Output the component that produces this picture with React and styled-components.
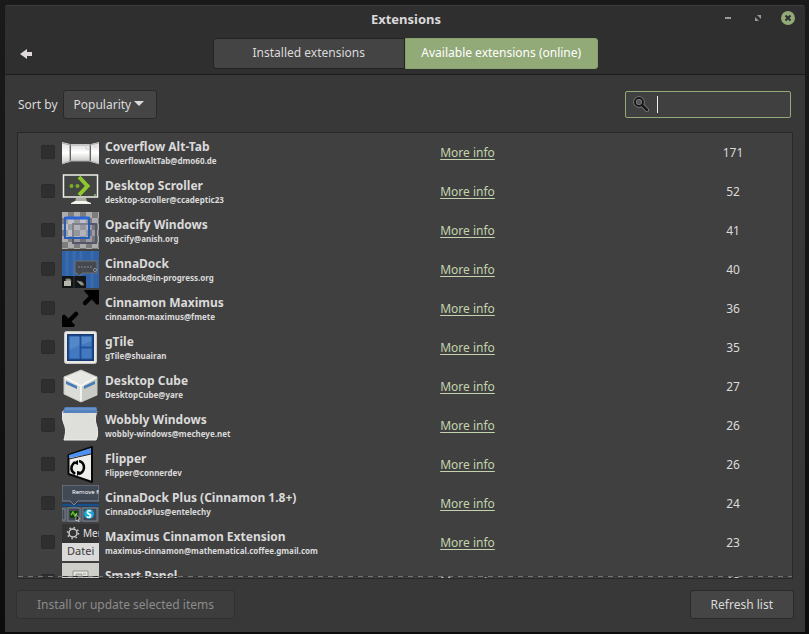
import React from "react";
import styled, { createGlobalStyle } from "styled-components";

const GlobalStyle = createGlobalStyle`
  * { box-sizing: border-box; }
  body {
    margin: 0;
    background: #161616;
    color: #dadada;
    font: 12px/18px "Noto Sans", sans-serif;
  }
  button, input, select { font: inherit; color: inherit; }
`;

const Desktop = styled.div`
  display: flex;
  height: 100vh;
  padding: 5px 4px 2px 5px;
  background: linear-gradient(#1a1a1a, #0c0c0c);
`;

const Window = styled.main`
  display: flex;
  flex: 1;
  flex-direction: column;
  min-width: 0;
  background: #383838;
  border-radius: 3px 3px 0 0;
  overflow: hidden;
`;

const Header = styled.header`
  height: 70px;
  flex: none;
  background: #2f2f2f;
  border-top: 1px solid #3d3d3d;
  border-bottom: 1px solid #1c1c1c;
`;

const TitleBar = styled.div`
  display: grid;
  grid-template-columns: 1fr auto 1fr;
  align-items: center;
  height: 24px;
  padding: 0 10px 0 12px;
`;

const Title = styled.h1`
  grid-column: 2;
  margin: 0;
  padding-top: 2px;
  font-size: 13px;
  line-height: 18px;
  font-weight: 700;
`;

const WindowButtons = styled.div`
  display: flex;
  justify-content: flex-end;
  gap: 16px;
`;

const IconButton = styled.button`
  display: flex;
  padding: 0;
  border: 0;
  background: none;
`;

const NavBar = styled.div`
  display: grid;
  grid-template-columns: 1fr 385px 1fr;
  align-items: center;
  height: 31px;
  margin-top: 8px;
  padding: 0 15px;
`;

const Tabs = styled.div`
  display: grid;
  grid-template-columns: 1fr 1fr;
  height: 31px;
`;

const Tab = styled.button`
  padding: 0 0 2px;
  border: 1px solid ${(p) => (p.$active ? "#8aa06e" : "#222")};
  border-radius: ${(p) => (p.$active ? "0 3px 3px 0" : "3px 0 0 3px")};
  background: ${(p) => (p.$active ? "#92a978" : "#444")};
  color: ${(p) => (p.$active ? "#fff" : "#dadada")};
`;

const Toolbar = styled.div`
  display: flex;
  align-items: center;
  flex: none;
  height: 57px;
  padding: 1px 14px 0 13px;
`;

const SortLabel = styled.label`
  padding-top: 1px;
  margin-right: 5px;
`;

const SelectWrap = styled.span`
  display: grid;
  grid-template-columns: 1fr 22px;
  align-items: center;
  width: 94px;
  height: 29px;
  border: 1px solid #292929;
  border-radius: 3px;
  background: #454545;

  svg { grid-area: 1 / 2; pointer-events: none; }
`;

const Select = styled.select`
  grid-area: 1 / 1 / 2 / 3;
  width: 100%;
  height: 27px;
  padding: 1px 10px 0;
  border: 0;
  background: none;
  appearance: none;
  outline: none;
`;

const SearchBox = styled.label`
  display: flex;
  align-items: center;
  width: 166px;
  height: 27px;
  margin-left: auto;
  padding: 0 8px 0 7px;
  border: 1px solid #92a978;
  border-radius: 2px;
  background: #404040;
`;

const Caret = styled.span`
  width: 1px;
  height: 17px;
  margin-left: 8px;
  background: #f0f0f0;
`;

const SearchInput = styled.input`
  flex: 1;
  min-width: 0;
  padding: 0;
  border: 0;
  background: none;
  outline: none;
`;

const ListFrame = styled.section`
  position: relative;
  flex: 1;
  min-height: 0;
  margin: 0 12px;
  border: 1px solid #282828;
  background: #404040;
  overflow: hidden;
`;

const OverflowHint = styled.div`
  position: absolute;
  right: 0;
  bottom: 1px;
  left: 0;
  height: 1px;
  background: repeating-linear-gradient(90deg, #747474 0 5px, #333 5px 10px);
`;

const List = styled.table`
  width: 100%;
  table-layout: fixed;
  border-collapse: collapse;
`;

const Column = styled.col`
  width: ${(p) => p.$width};
`;

const Row = styled.tr`
  height: 39px;
`;

const Cell = styled.td`
  padding: ${(p) => p.$pad || "0"};
  text-align: ${(p) => p.$align || "left"};
  vertical-align: middle;

  svg { display: block; }
`;

const Check = styled.input`
  display: block;
  appearance: none;
  width: 14px;
  height: 14px;
  margin: 0;
  border: 1px solid #292a32;
  border-radius: 2px;
  background: #2f2f2f;
`;

const Name = styled.label`
  display: block;
  font-weight: 700;
  line-height: 17px;
  white-space: nowrap;
`;

const Uuid = styled.div`
  font-size: 8px;
  font-weight: 700;
  line-height: 12px;
  white-space: nowrap;
`;

const InfoLink = styled.a`
  color: #c2d3ad;
  text-underline-offset: 2px;
`;

const Footer = styled.footer`
  display: flex;
  justify-content: space-between;
  flex: none;
  padding: 11px 11px 13px;
`;

const FooterButton = styled.button`
  height: 29px;
  padding: 0 20px;
  border: 1px solid #2a2a2a;
  border-radius: 3px;
  background: #454545;

  &:disabled {
    border-color: #303030;
    background: #3d3d3d;
    color: #8b8b8b;
  }
`;

const Thumb = ({ children }) => (
  <svg width="37" height="37" viewBox="0 0 37 37" aria-hidden="true">{children}</svg>
);

const Coverflow = () => (
  <Thumb>
    <defs>
      <linearGradient id="cf" x2="0" y2="1"><stop stopColor="#ddd" /><stop offset=".5" stopColor="#fff" /><stop offset="1" stopColor="#c9c9c6" /></linearGradient>
    </defs>
    <path d="M0 8l8 2v18l-8 2z" fill="url(#cf)" />
    <path d="M37 8l-8 2v18l8 2z" fill="url(#cf)" />
    <path d="M9 10h19v17H9z" fill="url(#cf)" />
    <path d="M8 10v18M28 10v18" stroke="#85857f" />
    <path d="M0 9l8 2h20l9-2M0 30l8-3h20l9 3" fill="none" stroke="#aaa" />
    <path d="M24 11v4h3M32 10v3h3" fill="none" stroke="#d0d0cb" />
  </Thumb>
);

const Scroller = () => (
  <Thumb>
    <path d="M14 25h10l1 4H13z" fill="#aaa9a2" />
    <path d="M9 30l4-2h11l5 2v1H9z" fill="#f4f4ee" />
    <rect x="1.5" y="2" width="34" height="22" fill="#424541" stroke="#eeeee9" strokeWidth="1.5" />
    <path d="M17 4l8.5 9-8.5 9" fill="none" stroke="#8dc928" strokeWidth="4" />
    <circle cx="9.5" cy="13" r="2" fill="#7bae27" />
    <circle cx="15.5" cy="13" r="2" fill="#7bae27" />
    <circle cx="33" cy="22" r="1" fill="#94b867" />
  </Thumb>
);

const Opacify = () => (
  <Thumb>
    <defs>
      <pattern id="checks" width="12" height="12" patternUnits="userSpaceOnUse">
        <path fill="#acacac" d="M0 0h12v12H0z" /><path fill="#7c7c7c" d="M0 6h6v6H0zM6 0h6v6H6z" />
      </pattern>
    </defs>
    <path fill="url(#checks)" d="M0 0h37v37H0z" />
    <path d="M11 12h23v19H11z" fill="#55566c33" stroke="#55556c" strokeWidth="2" />
    <path d="M3 6h24v20H3z" fill="#f4f9ff44" stroke="#265dbc" strokeWidth="2" />
    <path d="M3 6h24" stroke="#2a66d8" strokeWidth="3" />
  </Thumb>
);

const CinnaDock = () => (
  <Thumb>
    <path d="M0 0h37v37H0z" fill="#3060a5" />
    <path d="M5 0v26M12 0v26M19 0v26M30 0v37" stroke="#3a6bac" strokeWidth="3" />
    <path d="M13 10h22v12H20l-3 3-2-3h-2z" fill="#45494f" stroke="#6c7074" />
    <path d="M16 16h14" stroke="#85898d" strokeDasharray="2 1" />
    <circle cx="33" cy="19" r="1.5" fill="#333" stroke="#bbb" strokeWidth=".7" />
    <path d="M0 25h24v12H0z" fill="#111517" />
    <path d="M12 25v12" stroke="#343838" />
    <path d="M2 30h7v5H2z" fill="#b8b6ac" />
    <path d="M4 30v-2h4l1 2M15 30l5 1 2 3h-3z" fill="#9b998b" stroke="#77786f" />
  </Thumb>
);

const Arrows = () => (
  <Thumb>
    <path d="M32 4L23 13M5 33l9-9" stroke="#000" strokeWidth="4.5" strokeLinecap="round" />
    <path d="M22 1q0-1 2-1h13v14q-2 2-4-1L24 3zM0 26q2-3 4 0l9 9q0 2-2 2H0z" fill="#000" />
  </Thumb>
);

const Tile = () => (
  <Thumb>
    <rect x="2.5" y="2.5" width="32" height="32" rx="2" fill="#e8e8e5" stroke="#c9c9c5" />
    <rect x="5" y="5" width="27" height="27" fill="#173a72" />
    <path d="M7 7h11v23H7zM19 7h11v11H19zM19 19h11v11H19z" fill="#4379c0" />
    <path d="M7 7h11v9L7 21zM19 7h11v5l-11 4z" fill="#5588c9" />
    <path d="M7 7h11v23H7zM19 7h11v11H19zM19 19h11v11H19z" fill="none" stroke="#2459a0" />
  </Thumb>
);

const Cube = () => (
  <Thumb>
    <path d="M2 9l17-7 16 7v18l-16 7-17-8z" fill="#e7e8e4" />
    <path d="M2 9l17 9v16L2 26z" fill="#dcddd8" />
    <path d="M35 9l-16 9v16l16-8z" fill="#c9cbc5" />
    <path d="M2 9l17 9 16-9M19 18v16" fill="none" stroke="#fafaf7" strokeWidth="1.5" />
    <path d="M4 13l11 5v3L4 16zM33 13l-11 5v3l11-5z" fill="#477bb5" />
    <path d="M2 9l17-7 16 7v18l-16 7-17-8z" fill="none" stroke="#c3c5be" />
  </Thumb>
);

const Wobbly = () => (
  <Thumb>
    <path d="M1 4h34c-3 9-1 12 0 16 1 5 1 9-1 13H2c2-8 2-11 0-16-2-5-2-9-1-13z" fill="#dededb" stroke="#f1f1ef" />
    <path d="M2 2q0-2 2-2h29q2 0 2 2v4H1z" fill="#5582be" />
    <path d="M3 2h31" stroke="#78a2d7" />
  </Thumb>
);

const Flipper = () => (
  <Thumb>
    <path d="M6.5 9L30 1v35L6.5 28z" fill="#eeeeeb" stroke="#080808" strokeWidth="2" strokeLinejoin="round" />
    <path d="M7 9l22-7v6L7 12z" fill="#4e91f4" />
    <path d="M7 13l22-5" stroke="#222" />
    <path d="M13 16q-5 4-3 9l3 3M17 15q5 1 5 7-1 5-5 6" fill="none" stroke="#050505" strokeWidth="2.5" />
    <path d="M11 17l5-3v5zM20 26l-5 4v-5z" fill="#050505" />
  </Thumb>
);

const DockPlus = () => (
  <Thumb>
    <path d="M0 0h37v37H0z" fill="#303a49" />
    <path d="M0 0h37v16H16l-4 4-4-4H0z" fill="#414954" stroke="#7e8794" />
    <text x="10" y="9" fill="#fff" fontFamily="Noto Sans" fontSize="6">Remove fr</text>
    <path d="M0 20h8l4 2 4-2h21" fill="none" stroke="#12518b" strokeWidth="2" />
    <path d="M0 22h37v15H0z" fill="#535b66" />
    <path d="M0 24h3v11H0zM6 23h12v13H6zM21 23h14v13H21z" fill="#404751" stroke="#7c828c" />
    <path d="M8 26h8v7H8z" fill="#123c0b" /><path d="M9 30l2-3 2 4 2-3" fill="none" stroke="#6ab736" strokeWidth="1.5" />
    <circle cx="27" cy="29" r="5" fill="#15a9e5" />
    <text x="24" y="33" fill="#fff" fontFamily="Noto Sans" fontSize="10" fontWeight="700">S</text>
    <path d="M14 29l4 5h-2l1 3-2-2-1 1z" fill="#111" stroke="#eee" strokeWidth=".6" />
  </Thumb>
);

const Maximus = () => (
  <Thumb>
    <path d="M0 0h37v19H0z" fill="#343434" />
    <path d="M0 19h37v18H0z" fill="#dadada" />
    <circle cx="11" cy="9" r="4" fill="none" stroke="#ccc" strokeWidth="1.5" />
    <circle cx="11" cy="9" r="5.5" fill="none" stroke="#ccc" strokeWidth="1.5" strokeDasharray="1.5 2.8" />
    <text x="21" y="13" fill="#e5e5e5" fontFamily="Noto Sans" fontSize="10">Mer</text>
    <text x="5" y="31" fill="#3c3c3c" fontFamily="Noto Sans" fontSize="11">Datei</text>
  </Thumb>
);

const Panel = () => (
  <Thumb>
    <path d="M0 0h37v37H0z" fill="#cfcfca" />
    <path d="M11 8h15v13H11z" fill="#e8e8e3" stroke="#92958c" />
    <path d="M14 11h6v4h-6zM21 11h3M21 14h3" fill="#c9cbc3" stroke="#9b9d96" />
  </Thumb>
);

const extensions = [
  ["Coverflow Alt-Tab", "CoverflowAltTab@dmo60.de", 171, Coverflow],
  ["Desktop Scroller", "desktop-scroller@ccadeptic23", 52, Scroller],
  ["Opacify Windows", "opacify@anish.org", 41, Opacify],
  ["CinnaDock", "cinnadock@in-progress.org", 40, CinnaDock],
  ["Cinnamon Maximus", "cinnamon-maximus@fmete", 36, Arrows],
  ["gTile", "gTile@shuairan", 35, Tile],
  ["Desktop Cube", "DesktopCube@yare", 27, Cube],
  ["Wobbly Windows", "wobbly-windows@mecheye.net", 26, Wobbly],
  ["Flipper", "Flipper@connerdev", 26, Flipper],
  ["CinnaDock Plus (Cinnamon 1.8+)", "CinnaDockPlus@entelechy", 24, DockPlus],
  ["Maximus Cinnamon Extension", "maximus-cinnamon@mathematical.coffee.gmail.com", 23, Maximus],
  ["Smart Panel", "", 18, Panel],
];

export default function App() {
  return (
    <Desktop>
      <GlobalStyle />
      <Window>
        <Header>
          <TitleBar>
            <Title>Extensions</Title>
            <WindowButtons>
              <IconButton aria-label="Minimize">
                <svg width="14" height="14"><path d="M4 6h6v2H4z" fill="#9a9a9a" /></svg>
              </IconButton>
              <IconButton aria-label="Maximize">
                <svg width="14" height="14"><path d="M6 4h4v4zM4 6v4h4z" fill="#999" /></svg>
              </IconButton>
              <IconButton aria-label="Close">
                <svg width="14" height="14"><circle cx="7" cy="7" r="7" fill="#92a978" /><path d="M4.5 4.5l5 5m0-5l-5 5" stroke="#2f2f2f" strokeWidth="2" /></svg>
              </IconButton>
            </WindowButtons>
          </TitleBar>
          <NavBar>
            <IconButton aria-label="Back">
              <svg width="14" height="12"><path d="M0 6l7-5v3h5v4H7v3z" fill="#ded8dc" /></svg>
            </IconButton>
            <Tabs role="tablist">
              <Tab role="tab" aria-selected="false">Installed extensions</Tab>
              <Tab role="tab" aria-selected="true" $active>Available extensions (online)</Tab>
            </Tabs>
          </NavBar>
        </Header>
        <Toolbar>
          <SortLabel htmlFor="sort">Sort by</SortLabel>
          <SelectWrap>
            <Select id="sort" defaultValue="Popularity"><option>Popularity</option></Select>
            <svg width="10" height="6"><path d="M0 0h10L5 5z" fill="#dadada" /></svg>
          </SelectWrap>
          <SearchBox>
            <svg width="16" height="16" viewBox="0 0 16 16" aria-hidden="true">
              <path d="M9 9l5 5" stroke="#858585" strokeWidth="4" strokeLinecap="round" />
              <circle cx="6" cy="6" r="4" fill="#555" stroke="#858585" strokeWidth="3.5" />
              <circle cx="6" cy="6" r="4" fill="none" stroke="#181818" strokeWidth="2" />
              <path d="M9 9l5 5" stroke="#181818" strokeWidth="2.5" strokeLinecap="round" />
            </svg>
            <Caret />
            <SearchInput type="text" aria-label="Search extensions" />
          </SearchBox>
        </Toolbar>
        <ListFrame>
          <List>
            <colgroup>
              <Column $width="44px" /><Column $width="43px" /><Column $width="43.3%" /><Column /><Column $width="114px" />
            </colgroup>
            <tbody>
              {extensions.map(([name, uuid, score, Icon]) => (
                <Row key={name}>
                  <Cell $pad="0 0 2px 23px"><Check type="checkbox" id={name} /></Cell>
                  <Cell><Icon /></Cell>
                  <Cell><Name htmlFor={name}>{name}</Name><Uuid>{uuid || "\u00a0"}</Uuid></Cell>
                  <Cell><InfoLink href="#info">More info</InfoLink></Cell>
                  <Cell $align="center" $pad="0 4px 0 0">{score}</Cell>
                </Row>
              ))}
            </tbody>
          </List>
          <OverflowHint />
        </ListFrame>
        <Footer>
          <FooterButton disabled>Install or update selected items</FooterButton>
          <FooterButton>Refresh list</FooterButton>
        </Footer>
      </Window>
    </Desktop>
  );
}
